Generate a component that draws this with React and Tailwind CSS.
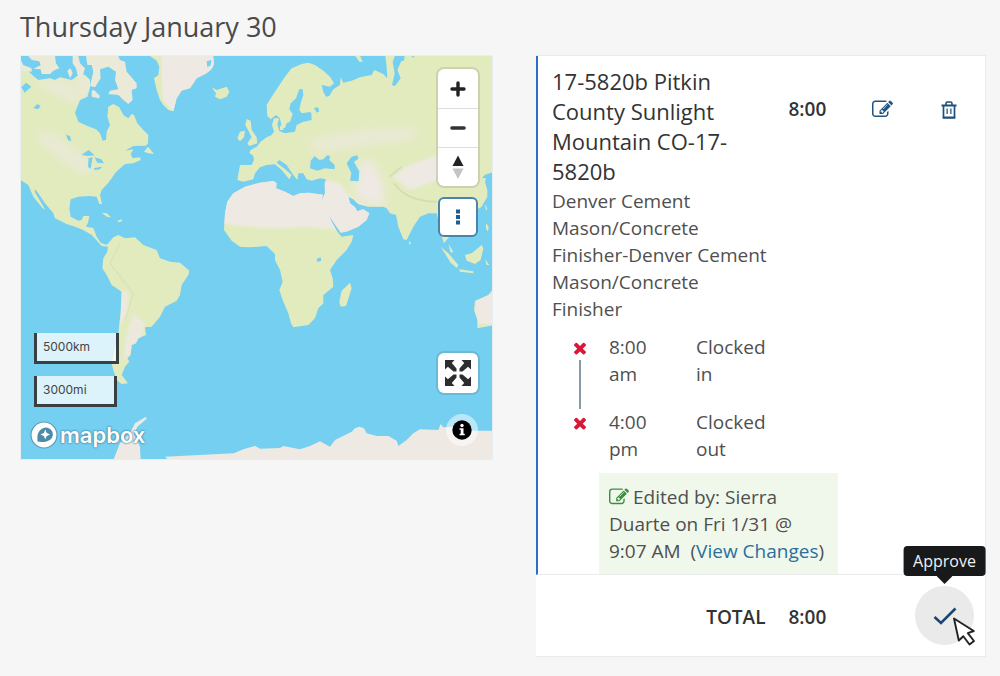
import React from "react";

const SEA = "#75cff0";
const LAND = "#e2ebbe";
const SAND = "#efe9e4";

const NORTH_AMERICA =
  "M62,540 L62,212 82,210 100,228 115,240 150,235 165,240 180,232 215,240 240,222 255,225 270,240 270,262 262,290 240,300 232,320 225,338 235,365 262,378 288,388 300,400 308,422 318,420 320,395 330,375 322,350 325,320 340,312 358,322 370,345 385,355 395,342 402,345 412,370 430,390 445,405 444,430 438,437 400,438 375,452 400,448 392,462 398,475 420,472 422,480 400,490 375,492 355,510 345,520 335,535 325,548 305,570 300,585 306,612 298,612 290,590 268,588 235,590 212,598 208,625 212,650 235,662 245,660 250,648 268,648 264,668 258,680 280,684 290,710 302,728 318,734 330,730 325,740 305,738 291,722 275,705 250,690 225,680 200,672 165,655 160,640 135,610 122,590 106,568 104,575 135,628 128,625 100,590 85,555Z";
const ARCTIC =
  "M85,168 L165,168 168,190 178,205 160,212 150,222 125,222 122,208 100,206 122,196 118,184 95,180Z M218,168 L235,168 240,190 255,205 248,228 235,235 228,205 218,190Z M258,168 L355,168 360,180 375,185 380,215 410,250 410,265 395,270 398,300 385,312 370,300 355,285 325,282 330,272 355,268 345,240 348,215 325,200 300,208 302,235 285,262 270,258 280,215 275,195 262,195Z M275,272 L282,270 300,288 297,295 275,290Z M202,212 L212,205 218,220 210,235Z M62,180 L70,195 95,205 95,215 62,212Z";
const GREENLAND =
  "M450,168 L640,168 642,192 635,208 620,220 590,235 570,265 545,272 530,295 520,334 505,330 490,315 480,300 470,270 462,235 475,225 478,200 470,182Z M635,262 L650,270 680,260 688,275 680,290 660,298 645,290 648,280Z";
const ISLES_WEST =
  "M720,395 L735,392 732,412 720,424 712,415Z M432,455 L444,440 462,462 445,460Z M305,638 L320,640 334,652 320,650Z M352,662 L366,658 366,664 355,667Z";
const EURASIA =
  "M0,345 L35,345 42,330 40,318 28,308 32,300 50,290 62,275 80,262 95,255 102,245 96,225 102,205 118,205 112,222 118,243 135,250 165,245 170,225 190,215 215,210 214,190 210,186 185,190 178,180 182,160 190,135 188,118 178,117 168,145 152,160 148,178 158,192 150,215 140,220 135,235 125,232 120,205 108,195 92,208 82,198 80,165 95,140 115,110 135,80 155,55 185,42 205,38 225,45 250,62 270,80 282,100 270,110 245,105 250,125 258,140 268,138 280,118 300,105 302,82 310,98 335,92 360,82 395,75 403,60 430,72 442,85 440,50 436,17 465,17 458,35 464,70 456,105 465,108 482,85 472,60 485,30 490,17 760,17 760,366 735,374 725,385 738,384 735,395 742,420 742,440 725,470 700,485 680,500 690,540 675,550 640,545 612,580 600,545 595,510 590,490 565,490 540,500 520,530 500,570 490,568 475,530 468,495 450,490 440,475 430,470 385,470 355,462 340,448 325,440 330,460 345,472 352,484 370,478 388,490 380,510 355,530 320,545 302,548 290,530 270,500 258,475 245,455 255,430 254,400 258,388 240,385 215,392 200,388 190,370 175,370 172,390 160,375 140,345 118,330 110,338 132,355 155,375 148,388 140,378 125,360 105,343 80,345 60,352 45,370 40,388 10,395 -8,390Z";
const AFRICA =
  "M15,410 L60,398 100,393 110,400 108,415 135,425 160,438 180,430 205,428 248,434 245,455 260,480 275,515 292,545 305,560 340,555 335,575 320,600 290,630 270,660 278,685 280,710 250,735 250,760 235,775 225,805 205,825 185,828 160,832 153,820 145,790 128,750 118,720 128,695 120,660 105,630 105,612 80,588 30,592 0,590 -25,572 -48,540 -45,490 -38,455 -20,430Z M330,698 L335,715 318,768 302,770 298,755 305,722Z M120,228 L130,226 130,240 120,240Z M20,207 L32,212 35,240 50,262 52,280 28,288 22,280 35,262 24,240 16,225Z M345,17 L360,17 368,36 358,35Z";
const SOUTH_AMERICA =
  "M295,40 L310,22 325,15 345,25 375,22 400,45 440,60 450,85 480,95 510,98 538,122 535,135 515,165 510,195 500,212 465,230 450,260 425,290 405,292 408,315 385,325 378,340 365,345 362,375 352,385 358,395 345,410 335,435 354,460 335,462 320,450 310,420 305,400 325,310 332,250 335,185 305,165 290,135 277,115 280,85 292,65Z";
const PACIFIC_ISLES =
  "M602,20 L625,40 655,75 650,84 632,68Z M675,45 L695,40 725,15 730,25 722,60 705,72 680,62Z M735,58 L748,75 740,75Z M625,12 L640,35 632,38Z M657,88 L700,94 700,100 660,95Z M760,146 L745,165 705,182 702,210 712,240 712,265 760,256Z";
const ANTARCTICA =
  "M0,632 L35,625 45,618 60,626 120,624 130,618 180,628 210,618 240,604 270,620 285,600 335,575 345,565 358,560 372,565 380,580 410,588 445,588 470,602 475,618 500,600 520,580 540,568 595,570 602,552 610,562 640,560 700,572 760,572 760,665 -210,665 -225,650 -18,640Z";
const WATER_WEST =
  "M64,262 L78,248 94,260 74,278Z M100,324 L112,312 122,318 114,328Z M198,404 L210,408 214,424 204,420Z M245,464 L266,450 284,466 262,468Z M266,474 L278,472 272,506 264,500Z M284,472 L304,478 312,490 292,488Z M282,504 L306,500 300,508 284,510Z M620,184 L634,180 632,196 622,202Z";
const WATER_EAST =
  "M210,355 L212,332 224,318 238,330 250,328 262,316 270,318 268,330 284,345 284,358 255,355 232,362Z M320,340 L335,320 352,316 355,326 342,335 350,350 358,364 356,394 330,392 334,370Z M222,174 L234,172 238,184 230,188Z M230,626 L242,622 244,632 232,636Z M484,17 L494,17 492,32 484,34Z M514,17 L523,17 520,24Z";

function WorldMap() {
  return (
    <svg
      className="block h-full w-full"
      viewBox="21 56 471 403"
      preserveAspectRatio="xMidYMid slice"
      role="img"
      aria-label="World map"
    >
      <defs>
        <filter id="soft" x="-30%" y="-30%" width="160%" height="160%">
          <feGaussianBlur stdDeviation="4" />
        </filter>
        <filter id="softer" x="-30%" y="-30%" width="160%" height="160%">
          <feGaussianBlur stdDeviation="14" />
        </filter>
        <clipPath id="clip-west"><path d={NORTH_AMERICA + GREENLAND} /></clipPath>
        <clipPath id="clip-east"><path d={EURASIA + AFRICA} /></clipPath>
        <clipPath id="clip-south"><path d={SOUTH_AMERICA} /></clipPath>
      </defs>
      <rect x="0" y="40" width="520" height="440" fill={SEA} />
      <g transform="scale(.33333)">
        <path d={NORTH_AMERICA + ISLES_WEST} fill={LAND} />
        <path d={ARCTIC} fill="#ebe9d8" />
        <path d={GREENLAND} fill={LAND} />
        <g clipPath="url(#clip-west)" fill={SAND}>
          <path d="M110,400 L160,400 250,470 290,510 240,520 190,480 120,430Z M220,225 L280,225 280,290 240,290Z M90,240 L200,240 260,320 180,290Z" filter="url(#softer)" opacity=".65" />
          <path d="M484,168 L640,168 642,200 620,220 570,265 545,272 520,334 488,300Z" />
        </g>
        <path d={WATER_WEST} fill={SEA} />
      </g>
      <g transform="translate(240 50) scale(.33333)">
        <path d={EURASIA + AFRICA} fill={LAND} />
        <g clipPath="url(#clip-east)" fill={SAND}>
          <path d="M-70,425 L120,380 260,430 300,540 200,530 90,535 -70,520Z" filter="url(#soft)" />
          <path d="M255,390 L300,400 330,440 400,480 370,530 300,550 240,450Z M460,380 L500,350 590,315 590,390 510,420Z" filter="url(#soft)" />
          <path d="M360,330 L400,335 430,400 435,470 350,450 345,400Z" filter="url(#softer)" />
          <path d="M210,270 L360,240 540,235 520,270 360,290 220,310Z" filter="url(#softer)" opacity=".65" />
        </g>
        <path d="M462,400 Q500,455 590,455 M450,380 L485,350" fill="none" stroke="#cfcdb0" strokeWidth="5" opacity=".6" />
        <path d={WATER_EAST} fill={SEA} />
        <path d="M735,462 L742,475 738,482Z M738,520 L746,530 744,545 738,535Z M506,572 L514,580 508,584Z" fill={LAND} />
      </g>
      <g transform="translate(10 230) scale(.33333)">
        <path d={SOUTH_AMERICA} fill={LAND} />
        <g clipPath="url(#clip-south)">
          <path d="M330,180 L355,190 355,240 325,300Z M370,250 L405,280 395,320 340,400 345,330Z" fill={SAND} filter="url(#soft)" opacity=".8" />
          <path d="M330,40 L300,100 370,190 345,270" fill="none" stroke="#d3d3b0" strokeWidth="4" opacity=".4" />
        </g>
        <path d="M310,690 L330,640 360,610 375,580 408,560 410,566 382,590 372,612 390,650 392,690Z M668,690 L675,670 700,658 735,648 755,662 755,690Z" fill={SAND} />
      </g>
      <g transform="translate(240 240) scale(.33333)">
        <path d={PACIFIC_ISLES} fill={LAND} />
        <path d="M760,158 L708,184 706,215 716,250 760,254Z" fill={SAND} />
        <path d={ANTARCTICA} fill={SAND} />
      </g>
    </svg>
  );
}

function EditIcon({ className }) {
  return (
    <svg className={className} viewBox="0 0 1792 1792" fill="currentColor" aria-hidden="true">
      <path d="M888 1184l116-116-152-152-116 116v56h96v96h56zm440-720q-16-16-33 1l-350 350q-17 17-1 33t33-1l350-350q17-17 1-33zm80 594v190q0 119-84.5 203.5t-203.5 84.5h-832q-119 0-203.5-84.5t-84.5-203.5v-832q0-119 84.5-203.5t203.5-84.5h832q63 0 117 25 15 7 18 23 3 17-9 29l-49 49q-14 14-32 8-23-6-45-6h-832q-66 0-113 47t-47 113v832q0 66 47 113t113 47h832q66 0 113-47t47-113v-126q0-13 9-22l64-64q15-15 35-7t20 29zm-96-738l288 288-672 672h-288v-288zm444 132l-92 92-288-288 92-92q28-28 68-28t68 28l152 152q28 28 28 68t-28 68z" />
    </svg>
  );
}

function TimesIcon() {
  return (
    <svg className="size-[18px]" viewBox="0 0 1792 1792" fill="#d81836" aria-hidden="true">
      <path d="M1490 1322q0 40-28 68l-136 136q-28 28-68 28t-68-28l-294-294-294 294q-28 28-68 28t-68-28l-136-136q-28-28-28-68t28-68l294-294-294-294q-28-28-28-68t28-68l136-136q28-28 68-28t68 28l294 294 294-294q28-28 68-28t68 28l136 136q28 28 28 68t-28 68l-294 294 294 294q28 28 28 68z" />
    </svg>
  );
}

function TrashIcon() {
  return (
    <svg className="h-[18px] w-4" viewBox="0 0 16 18" fill="none" stroke="#1f4f7a" strokeLinejoin="round" aria-hidden="true">
      <path d="M5 4V2.500Q5 1 6.500 1h3Q11 1 11 2.500V4" strokeWidth="1.600" />
      <path d="M.5 4.500h15" strokeWidth="2" />
      <path d="M2.500 5v11.500h11V5" strokeWidth="1.700" />
      <path d="M6.200 7.500v5.500M9.800 7.500v5.500" strokeWidth="1.700" opacity=".75" />
      <path d="M1.700 16.700h12.600" strokeWidth="2" />
    </svg>
  );
}

function MapControls() {
  return (
    <div className="flex flex-col items-end justify-between pt-[13px] pr-[14px] pb-[13px]">
      <div className="flex flex-col gap-[11px]">
        <div className="flex w-10 flex-col divide-y divide-[#dddddd] rounded-md bg-white shadow-[0_0_0_2px_rgba(0,0,0,0.1)]">
          <button type="button" aria-label="Zoom in" className="grid h-10 place-items-center">
            <svg className="size-4" viewBox="0 0 16 16" stroke="#222" strokeWidth="3.400" strokeLinecap="round" aria-hidden="true">
              <path d="M8 2v12M2 8h12" />
            </svg>
          </button>
          <button type="button" aria-label="Zoom out" className="grid h-[39px] place-items-center">
            <svg className="size-4" viewBox="0 0 16 16" stroke="#333" strokeWidth="3.600" strokeLinecap="round" aria-hidden="true">
              <path d="M2 8h12" />
            </svg>
          </button>
          <button type="button" aria-label="Reset bearing" className="grid h-[38px] place-items-center">
            <svg className="h-6 w-3" viewBox="0 0 12 24" aria-hidden="true">
              <path d="M6 .5L11.500 11H.5z" fill="#222" />
              <path d="M.5 13.500h11L6 24z" fill="#c4c4c4" />
            </svg>
          </button>
        </div>
        <button type="button" aria-label="Map options" className="grid size-10 place-items-center rounded-md border-2 border-[#4a84ad] bg-white">
          <svg className="h-4 w-1" viewBox="0 0 4 16" fill="#1c5f94" aria-hidden="true">
            <path d="M0 .5h4v4H0zM0 6h4v4H0zM0 11.500h4v4H0z" />
          </svg>
        </button>
      </div>
      <div className="flex flex-col items-end gap-[21px]">
        <button type="button" aria-label="Full screen" className="grid size-10 place-items-center rounded-md bg-white shadow-[0_0_0_2px_rgba(0,0,0,0.1)]">
          <svg className="size-[26px]" viewBox="0 0 26 26" fill="#2d2d2d" aria-hidden="true">
            <path id="corner" d="M0 0h9.500L6.800 2.900 11.500 8.500 11.500 11.500 8.500 11.500 2.900 6.800 0 9.500z" />
            <use href="#corner" transform="matrix(-1 0 0 1 26 0)" />
            <use href="#corner" transform="matrix(1 0 0 -1 0 26)" />
            <use href="#corner" transform="matrix(-1 0 0 -1 26 26)" />
          </svg>
        </button>
        <button type="button" aria-label="Attribution" className="grid size-8 place-items-center rounded-full bg-white/50">
          <svg className="size-5" viewBox="0 0 20 20" aria-hidden="true">
            <circle cx="10" cy="10" r="9.700" fill="#000" />
            <circle cx="10" cy="5.500" r="1.700" fill="#fff" />
            <path d="M7.500 8.300h4v5.400h1.200v1.500H7.500v-1.500h1.200V9.800H7.500z" fill="#fff" />
          </svg>
        </button>
      </div>
    </div>
  );
}

function MapPanel() {
  return (
    <div className="relative aspect-[473/405] border border-[#e6eef2]">
      <WorldMap />
      <div className="absolute inset-0 flex justify-between">
        <div className="flex flex-col items-start justify-end pb-[10px] pl-[9px] font-['Inter','Liberation_Sans',sans-serif]">
          <div className="ml-1 flex h-[31px] w-[85px] items-center border-[3px] border-t-0 border-[#3a3f42] bg-white/75 px-[6px] text-xs text-[#444]">5000km</div>
          <div className="mt-3 ml-1 flex h-[31px] w-[83px] items-center border-[3px] border-t-0 border-[#3a3f42] bg-white/75 px-[6px] text-xs text-[#444]">3000mi</div>
          <a href="#mapbox" className="mt-[14px] flex items-center gap-[2px] text-white">
            <svg className="size-[28px]" viewBox="0 0 28 28" aria-hidden="true">
              <circle cx="14" cy="14" r="13" fill="#fff" stroke="#5b9cb8" strokeWidth="1.200" />
              <path d="M7.500 20.600Q6.500 11 11.500 8a7 7 0 1 1 5 12.400Q12.500 21.300 7.500 20.600z" fill="#4c8ba8" />
              <path d="M15.300 8.600l1.500 3.300 3.300 1.500-3.300 1.500-1.500 3.300-1.500-3.300-3.300-1.500 3.300-1.500z" fill="#fff" />
            </svg>
            <span className="text-[22px] leading-7 font-semibold [text-shadow:0_0_2px_#3f7f9f,0_0_2px_#3f7f9f]">mapbox</span>
          </a>
        </div>
        <MapControls />
      </div>
    </div>
  );
}

const ROW = "grid grid-cols-[222fr_68fr_82fr_51fr] pl-[14px] pr-[11px]";

function Punch({ time, label, connected }) {
  return (
    <li className="grid grid-cols-[57px_87px_80px]">
      <span className="flex flex-col items-center pt-[5px] pr-[2px]">
        <TimesIcon />
        {connected && <span className="mt-[3px] w-[2px] flex-1 bg-[#8799a3]" />}
      </span>
      <span className={connected ? "w-14 pb-[21px]" : "w-14 pb-[10px]"}>{time}</span>
      <span>{label}</span>
    </li>
  );
}

function TimeCard() {
  return (
    <section className="border border-l-0 border-[#ebebeb] bg-white text-[19px] leading-[27px] text-[#4f4f4f]">
      <div className="border-b border-l-2 border-b-[#ebebeb] border-l-[#2d6fc6] pt-[10px]">
        <div className={ROW}>
          <div>
            <h2 className="mb-[2px] text-[22px] leading-[30px] font-medium text-[#333]">
              17-5820b Pitkin County Sunlight Mountain CO-17-5820b
            </h2>
            <p>Denver Cement Mason/Concrete Finisher-Denver Cement Mason/Concrete Finisher</p>
          </div>
          <span className="pt-[30px] text-center font-semibold text-[#333]">8:00</span>
          <div className="pt-[30px] text-center">
            <button type="button" aria-label="Edit" className="inline-grid h-[27px] place-items-center align-top text-[#1f5482]">
              <EditIcon className="size-[21px]" />
            </button>
          </div>
          <div className="pt-[30px] text-center">
            <button type="button" aria-label="Delete" className="inline-grid h-[27px] place-items-center align-top">
              <TrashIcon />
            </button>
          </div>
        </div>
        <ul className="mt-[11px] pl-[14px]">
          <Punch time="8:00 am" label="Clocked in" connected />
          <Punch time="4:00 pm" label="Clocked out" />
        </ul>
        <p className="ml-[61px] w-[239px] bg-[#f0f8ec] px-[10px] pt-[11px] pb-[9px]">
          <EditIcon className="mr-1 inline size-5 align-[-3px] text-[#3a8f3f]" />
          Edited by: Sierra Duarte on Fri 1/31 @ 9:07 AM&nbsp; (
          <a href="#changes" className="text-[#2a6f9e]">View Changes</a>)
        </p>
      </div>
      <div className={ROW + " ml-[2px] items-center py-[11px] font-semibold text-[#333]"}>
        <span className="pt-[3px] pr-2 text-right">TOTAL</span>
        <span className="pt-[3px] text-center">8:00</span>
        <div className="col-span-2 flex justify-end">
          <div className="relative">
            <button type="button" aria-label="Approve" className="grid size-[59px] place-items-center rounded-full bg-[#eaeaea]">
              <svg className="h-[18px] w-6" viewBox="0 0 24 18" fill="none" stroke="#1b4672" strokeWidth="2.600" aria-hidden="true">
                <path d="M1.500 10L8 16 22.500 1.500" />
              </svg>
            </button>
            <div role="tooltip" className="absolute bottom-[69px] left-1/2 flex h-[30px] -translate-x-1/2 items-center rounded-[4px] bg-[#17191b] px-[10px] text-base font-normal text-[#f2f2f2]">
              Approve
              <svg className="absolute top-full left-1/2 h-2 w-4 -translate-x-1/2" viewBox="0 0 16 8" fill="#17191b" aria-hidden="true">
                <path d="M0 0h16L8 8z" />
              </svg>
            </div>
            <svg className="absolute top-[30px] left-[37px] h-[30px] w-6" viewBox="0 0 24 30" fill="#fff" stroke="#222" strokeWidth="1.900" strokeLinejoin="round" aria-hidden="true">
              <path d="M2 2.500L6.800 24.500 11.300 20.200 17.500 28.500 22 25 15.800 17.200 21.800 15z" />
            </svg>
          </div>
        </div>
      </div>
    </section>
  );
}

export default function App() {
  return (
    <main className="min-h-screen bg-[#f6f6f6] pt-[9px] pr-[14px] pb-[18px] pl-5 font-['Open_Sans','Noto_Sans',sans-serif]">
      <h1 className="mb-[10px] text-[27px] leading-9 text-[#4a4a4a]">Thursday January 30</h1>
      <div className="grid grid-cols-[473fr_450fr] items-start gap-[43px]">
        <MapPanel />
        <TimeCard />
      </div>
    </main>
  );
}
